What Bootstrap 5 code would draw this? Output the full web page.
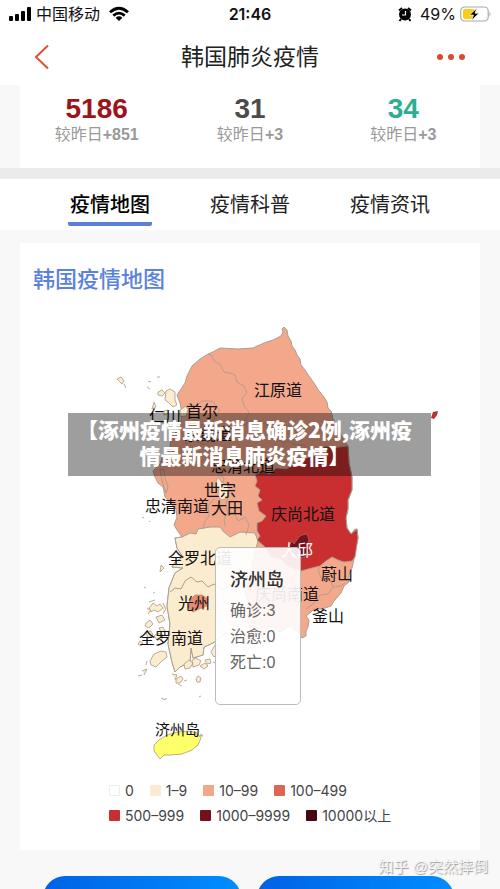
<!DOCTYPE html>
<html lang="zh-CN">
<head>
<meta charset="utf-8">
<meta name="viewport" content="width=device-width, initial-scale=1">
<title>韩国肺炎疫情</title>
<link href="https://cdn.jsdelivr.net/npm/bootstrap@5.3.0/dist/css/bootstrap.min.css" rel="stylesheet">
<style>
body{font-family:"Liberation Sans","Noto Sans CJK SC",sans-serif;background:#f8f8f8;color:#222}
.status-bar{height:28px;font-family:Inter,"Noto Sans CJK SC",sans-serif;font-size:16px;line-height:28px;color:#111}
.title-bar{height:57px;padding:0 34px}
.title-bar h1{font-size:23px;line-height:32px}
.icon-btn{border:0;background:none;padding:0;line-height:0}
.stat-panel{margin:0 20px;height:83px;padding-top:8px}
.stat-num{font-size:28px;line-height:32px;font-weight:700}
.stat-confirmed{color:#a01218}.stat-dead{color:#4b4b4b}.stat-cured{color:#2cae90}
.stat-diff{font-size:16px;line-height:20px;color:#999}
.divider-band{height:11px;background:#ebebeb}
.tab-strip{height:51px;padding:0 40px}
.tab-strip a{font-size:20px;line-height:32px;color:#222;text-decoration:none;padding-top:10px}
.tab-strip a span{display:inline-block;padding:0 2px;height:37px}
.tab-strip a.active span{font-weight:500;color:#000;border-bottom:4px solid #5a7fd6;border-radius:2px}
.map-panel{margin:13px 20px 0;height:607px}
.map-panel h2{font-size:22px;line-height:32px;font-weight:500;color:#5a82dc;padding:21px 0 0 13px}
.map-svg{display:block;width:100%;margin-top:4px}
.map-svg text{font-family:"Noto Sans CJK SC",sans-serif;font-size:16px;fill:#111}
.coast{stroke:#aaa091;stroke-width:1;stroke-linejoin:round}
.headline{left:48px;right:49px;top:170px;height:63px;padding:3px 10px 0 0;background:rgba(0,0,0,.38);color:#fff;font-size:21px;line-height:26px;font-weight:900;font-family:"Noto Sans CJK SC",sans-serif}
.region-tip{left:195px;top:304px;width:86px;height:158px;padding:18px 0 0 14px;background:rgba(255,255,255,.9);border:1px solid #bbb;border-radius:5px;font-size:16px;line-height:26px;color:#666}
.region-tip strong{display:block;font-size:18px;line-height:28px;color:#333;font-weight:500;margin-bottom:4px}
.legend-box{font-family:Inter,"Noto Sans CJK SC",sans-serif;font-size:14px;line-height:25px;color:#444;padding-left:89px}
.legend-box ul{column-gap:16px}
.swatch{width:11px;height:11px;margin-right:5px;border-radius:1px}
.s0{background:#fff;border:1px solid #eee}.s1{background:#fbebcf}.s2{background:#f0a88c}.s3{background:#dc6655}.s4{background:#c92f31}.s5{background:#721119}.s6{background:#450710}
.credit{height:26px;padding:7px 12px 0 0;font-size:15px;line-height:19px;color:#f4f4f4;text-shadow:1px 1px 1px #999}
.action-row{min-height:0;padding:0 46px 0 43px;gap:16px}
.action-row button{height:44px;border:0;border-radius:22px;background:linear-gradient(90deg,#0062e6,#008dff)}
</style>
<script src="https://cdn.jsdelivr.net/npm/bootstrap@5.3.0/dist/js/bootstrap.bundle.min.js"></script>
</head>
<body>
<div class="vh-100 overflow-hidden d-flex flex-column">
<header class="bg-white flex-shrink-0">
  <div class="status-bar d-flex align-items-center px-2">
    <div class="d-flex align-items-center flex-fill w-100 gap-1">
      <svg width="24" height="14" viewBox="0 0 24 14" aria-hidden="true"><g fill="#000"><rect x="1" y="9" width="4" height="5" rx="1"/><rect x="7" y="7" width="4" height="7" rx="1"/><rect x="13" y="4" width="4" height="10" rx="1"/><rect x="19" y="0" width="4" height="14" rx="1"/></g></svg>
      <span class="text-nowrap">中国移动</span>
      <svg class="ms-1" width="22" height="16" viewBox="0 0 22 16" fill="none" stroke="#000" stroke-width="2.8" aria-hidden="true"><path d="M2 6.2Q11-1.8 20 6.2M5.3 9.6Q11 4.6 16.7 9.6"/><path d="M11 15l-3.4-3.3q3.4-2.8 6.8 0z" fill="#000" stroke="none"/></svg>
    </div>
    <span class="fw-semibold">21:46</span>
    <div class="d-flex align-items-center justify-content-end flex-fill w-100">
      <svg class="me-2" width="14" height="15" viewBox="0 0 14 15" aria-hidden="true"><circle cx="7" cy="7.5" r="6" fill="#000"/><path d="M1 3.5L4 1M13 3.5L10 1M3 12l-1.5 2M11 12l1.5 2" stroke="#000" stroke-width="2"/><path d="M7.5 4v4H4" fill="none" stroke="#fff" stroke-width="1.2"/></svg>
      <span>49%</span>
      <svg class="ms-1" width="32" height="16" viewBox="0 0 32 16" aria-hidden="true"><rect x=".7" y="1" width="27.5" height="14" rx="4" fill="#fff" stroke="#aaa" stroke-width="1.2"/><path d="M5 3h9v10H5q-2 0-2-2V5q0-2 2-2z" fill="#f8cd1b"/><path d="M17 2L9.5 9h4L11.5 14.5 19 7.2h-4z" fill="#000" stroke="#fff" stroke-width=".7"/><path d="M29.5 5.5q2 2.5 0 5z" fill="#aaa"/></svg>
    </div>
  </div>
  <div class="title-bar d-flex align-items-center justify-content-between">
    <button class="icon-btn" type="button" aria-label="返回"><svg width="30" height="26" viewBox="0 0 30 26" fill="none" stroke="#dc5232" stroke-width="2"><path d="M14 1.5L2 13l12 11.5"/></svg></button>
    <h1 class="m-0 fw-normal">韩国肺炎疫情</h1>
    <button class="icon-btn" type="button" aria-label="更多"><svg width="30" height="8" viewBox="0 0 30 8" fill="#dc4a2b"><circle cx="4" cy="4" r="3"/><circle cx="15" cy="4" r="3"/><circle cx="26" cy="4" r="3"/></svg></button>
  </div>
</header>
<section class="stat-panel bg-white flex-shrink-0">
  <div class="row g-0 text-center">
    <div class="col"><div class="stat-num stat-confirmed">5186</div><div class="stat-diff">较昨日<b>+851</b></div></div>
    <div class="col"><div class="stat-num stat-dead">31</div><div class="stat-diff">较昨日<b>+3</b></div></div>
    <div class="col"><div class="stat-num stat-cured">34</div><div class="stat-diff">较昨日<b>+3</b></div></div>
  </div>
</section>
<div class="divider-band flex-shrink-0"></div>
<nav class="tab-strip bg-white row g-0 text-center flex-shrink-0">
  <a class="col active" href="#map"><span>疫情地图</span></a>
  <a class="col" href="#science"><span>疫情科普</span></a>
  <a class="col" href="#news"><span>疫情资讯</span></a>
</nav>
<main class="map-panel bg-white position-relative flex-shrink-0" id="map">
  <h2 class="m-0">韩国疫情地图</h2>
  <svg class="map-svg" viewBox="20 300 460 478" role="img" aria-label="韩国疫情地图">
    <path class="coast" fill="#f3a78b" d="M284 327L287 330 288 336 291 341 292 346 295 350 297 355 300 359 301 365 305 370 309 376 314 383 319 391 324 397 327 402 328 408 331 411 333 419 338 428 342 437 348 446 349 463 352 477 352 490 348 500 348 509 346 518 347 528 351 534 355 529 357 529 358 538 355 548 354 559 352 568 349 575 349 582 344 586 341 593 334 601 331 606 325 608 320 609 314 609 310 613 306 616 309 620 308 627 306 631 306 636 302 638 299 633 290 626 280 632 270 626 258 638 245 640 226 633 213 643 204 647 203 655 193 658 191 648 190 662 180 667 175 672 172 662 168 644 170 624 167 606 169 588 175 573 183 568 172 567 175 562 183 557 177 548 175 538 182 537 177 530 174 525 177 517 176 509 170 503 165 497 163 487 158 483 155 477 153 471 160 464 163 455 170 447 171 437 180 428 182 413 180 403 177 395 185 383 187 376 192 366 200 359 208 354 213 352 220 348 238 349 253 348 264 343 273 340 281 336 283 332 282 329Z"/>
    <path class="coast" fill="#fbebcf" d="M182 537L190 533 196 534 198 529 210 527 220 527 224 532 230 537 240 532 255 533 258 541 253 560 249 578 245 592 250 608 247 620 252 632 245 640 226 633 213 643 204 647 203 655 193 658 191 648 190 662 180 667 175 672 172 662 168 644 170 624 167 606 169 588 175 573 183 568 172 567 175 562 183 557 177 548 175 538Z"/>
    <path class="coast" fill="none" d="M170 592l5-4 6 1 4-8 6-4 6 5 5-1 6 6 6-3 7 6 9-5 15 4"/>
    <path class="coast" fill="#c92f31" d="M348 446L339 447 333 448 326 446 320 449 314 456 303 459 294 465 286 469 276 468 270 474 262 471 255 475 257 481 255 486 260 490 258 496 262 500 257 503 259 511 266 516 262 521 257 523 257 531 260 536 257 540 265 547 270 557 280 559 288 567 301 571 312 568 320 566 326 561 332 557 338 560 344 562 352 561 355 557 358 538 357 529 351 534 347 528 346 518 348 509 348 500 352 490 352 477 349 463Z"/>
    <path fill="#72121c" stroke="#b66860" stroke-width=".7" d="M302 535L307 534 309 540 307 545 310 550 305 557 297 558 291 553 289 546 292 541 294 544 299 537Z"/>
    <g fill="none" stroke="#aa9b8f" stroke-width=".8">
      <path d="M208 354l4 2 3 6 5 2 4 8 6 1 5 2 2 7 7 4 3 7-5 5 2 8 5 6-3 8-7 5-4 9-6 5-12 0-12 6-11-4-9 3"/>
      <path d="M244 425l9-4 5 4 7-2 7 7 5 9 7 4 5-2 7 4 8 0 4 6 12-1"/>
      <path d="M208 450l8 8 2 12 6 9-3 9 7 8-2 8 2 10 6-2 4 9 7-4 4 8-3 10M203 529l2-8 4-5-1-10 6-7M228 513l-4 6 1 7"/>
      <path d="M323 563l-5 7 3 8 9 1 3 8 8-1 4-3M333 587l-5 7-8 1-6 8-8 6"/>
      <path d="M220 410l-8-9-10 0-6 5-7-2-6 6 5 8 9 2 3 5 12 0 3-8z"/>
    </g>
    <path fill="#fbebcf" stroke="#a79b83" stroke-width=".7" d="M218 477l4 6 5 1 2 7-2 7-5 2-4-4 1-7-4-4z"/>
    <path fill="#e78b72" stroke="#b88470" stroke-width=".7" d="M190 600l5-5 7 0 6 4-1 7-8 3-6 3-5-5z"/>
    <g fill="#fbebcf" stroke="#a79b83" stroke-width=".8" stroke-linejoin="round">
      <path d="M158 392l4-2 3 3-3 3-4-1zM166 391l4-2 5 3 0 8 2 5-4 2-4-4-4-3zM154 402l2 5-4 2zM164 411l4-1 0 4-4 1zM180 410l6-4 2 4-2 6-6 1zM157 377l3 0M148 381l3 1M117 379l4-2 3 4-2 3zM124 384l2 4M147 387l3 2"/>
      <path d="M160 469l4 1 1 8 3 9-2 6-3-9-2-8z" fill="#f3a78b"/>
      <path d="M150 661L154 654 161 651 166 652 167 657 162 661 156 667 151 665ZM146 623l4-3 3 4-4 4-4-2zM149 608l4-5 4 3 3-2 3 4-5 4-4-2-3 2zM156 617l6-2 3 5-6 3zM146 632l5-1 2 4-5 3zM154 636l4-3 5 2-1 4-5 1zM140 641l3 2-2 3-3-2zM159 628l4-1 2 4-4 1z"/>
      <path d="M184 664l5-4 4 3-3 5-5 1zM192 660l4-2 5 3-2 4-6 2zM200 666l5-3 3 3-4 3zM176 679l5-3 2 3-3 4-4 0zM184 681l3-1M196 679l2-3 3 2-1 4-3 0zM211 652l4-7 4 1-2 8-3 3zM205 660l5-1 1 4-4 1zM213 662l3 1M142 671l5-2-3 6M138 676l4-1M161 698l4 2 2-2M199 697l2-1M147 661l-1 4M144 587l2 1M153 593l2-1M142 517l2 1M149 521l1 1M161 565l3 3-4 4z"/>
      <path d="M147 608l4 2-3 4M149 602l6-2M163 603l3 6-3 5M172 674l5 1-2 5M182 686l-4-2"/>
      <path fill="#ffff6c" d="M154 745L159 740 167 735 178 732 189 731 197 733 201 738 198 745 192 750 182 754 171 755 164 755 160 759 157 755 154 751Z"/>
      <path d="M200 736l1-2 2 2z"/>
    </g>
    <path fill="#b92f35" d="M432 415l1-3 5-1-1 4-3 4-3-1z"/>
    <text x="254" y="396">江原道</text><text x="186" y="417">首尔</text><text x="149" y="422">仁川</text>
    <text x="184" y="440">京畿道</text><text x="211" y="472">忠清北道</text><text x="204" y="496">世宗</text>
    <text x="211" y="514">大田</text><text x="145" y="512">忠清南道</text><text x="271" y="520">庆尚北道</text>
    <text x="168" y="564">全罗北道</text><text x="178" y="609">光州</text><text x="139" y="644">全罗南道</text>
    <text x="255" y="600">庆尚南道</text><text x="321" y="580">蔚山</text><text x="312" y="622">釜山</text>
    <text x="281" y="556" style="fill:#fff">大邱</text><text x="155" y="735" style="font-size:15px">济州岛</text>
  </svg>
  <div class="region-tip position-absolute"><strong>济州岛</strong>确诊:3<br>治愈:0<br>死亡:0</div>
  <div class="headline position-absolute text-center text-nowrap">【涿州疫情最新消息确诊2例,涿州疫<br>情最新消息肺炎疫情】</div>
  <div class="legend-box">
    <ul class="list-unstyled d-flex m-0">
      <li class="d-flex align-items-center"><i class="swatch s0"></i>0</li>
      <li class="d-flex align-items-center"><i class="swatch s1"></i>1–9</li>
      <li class="d-flex align-items-center"><i class="swatch s2"></i>10–99</li>
      <li class="d-flex align-items-center"><i class="swatch s3"></i>100–499</li>
    </ul>
    <ul class="list-unstyled d-flex m-0">
      <li class="d-flex align-items-center"><i class="swatch s4"></i>500–999</li>
      <li class="d-flex align-items-center"><i class="swatch s5"></i>1000–9999</li>
      <li class="d-flex align-items-center"><i class="swatch s6"></i>10000以上</li>
    </ul>
  </div>
</main>
<div class="credit text-end flex-shrink-0">知乎 @突然摔倒</div>
<div class="action-row d-flex align-items-start overflow-hidden">
  <button class="flex-fill" type="button" aria-label="疫情上报"></button>
  <button class="flex-fill" type="button" aria-label="疫情查询"></button>
</div>
</div>
</body>
</html>
